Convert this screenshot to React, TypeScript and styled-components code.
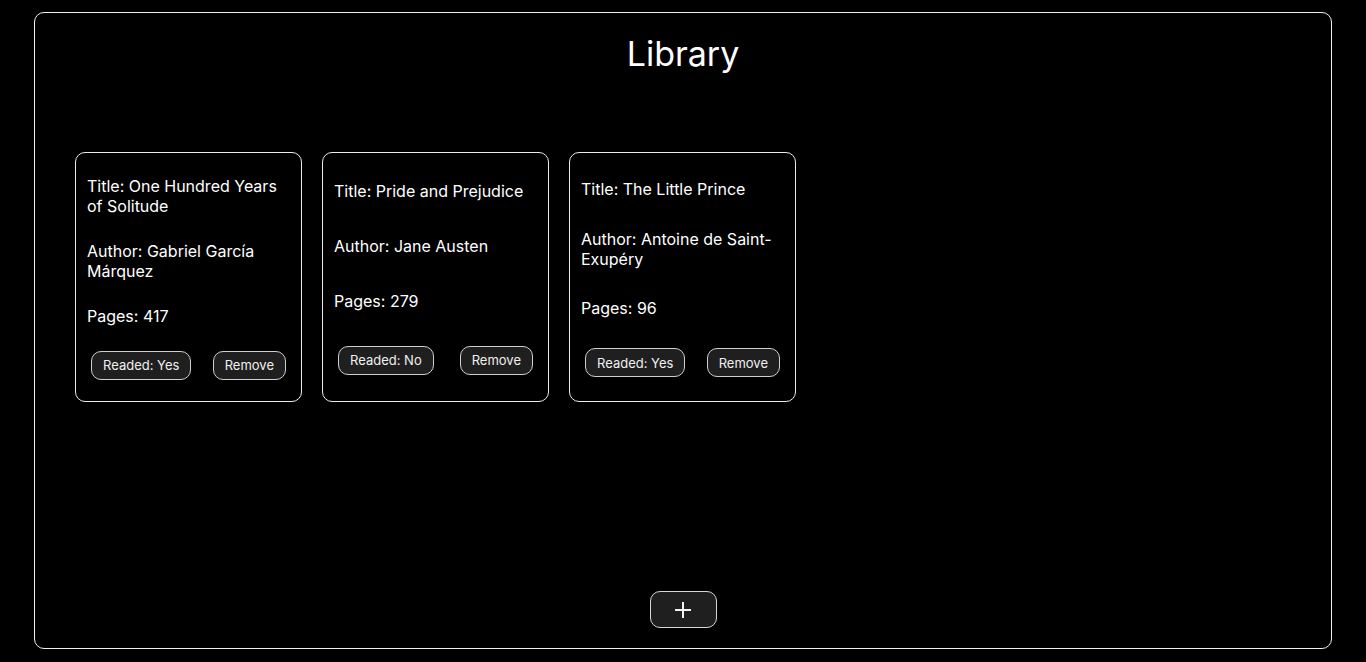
import React from "react"
import styled, { createGlobalStyle } from "styled-components"

type Book = { title: string; author: string; pages: number; read: boolean }

const books: Book[] = [
  { title: "One Hundred Years of Solitude", author: "Gabriel García Márquez", pages: 417, read: true },
  { title: "Pride and Prejudice", author: "Jane Austen", pages: 279, read: false },
  { title: "The Little Prince", author: "Antoine de Saint-Exupéry", pages: 96, read: true },
]

const GlobalStyle = createGlobalStyle`
  * {
    box-sizing: border-box;
  }
  body {
    margin: 0;
    background: #000;
    color: #fff;
    font-family: Inter, "Noto Sans", sans-serif;
  }
`

const PlusIcon = () => (
  <svg width="20" height="20" viewBox="0 0 20 20" fill="none">
    <path d="M10 2v16M2 10h16" stroke="#f2f2f2" strokeWidth="2" />
  </svg>
)

export default function App() {
  return (
    <>
      <GlobalStyle />
      <S.Page>
        <S.Frame>
          <S.Heading>Library</S.Heading>
          <S.Grid>
            {books.map((book) => (
              <S.Card key={book.title}>
                <S.Line>Title: {book.title}</S.Line>
                <S.Line>Author: {book.author}</S.Line>
                <S.Line>Pages: {book.pages}</S.Line>
                <S.Actions>
                  <S.SmallButton>Readed: {book.read ? "Yes" : "No"}</S.SmallButton>
                  <S.SmallButton>Remove</S.SmallButton>
                </S.Actions>
              </S.Card>
            ))}
          </S.Grid>
          <S.AddButton aria-label="Add book">
            <PlusIcon />
          </S.AddButton>
        </S.Frame>
      </S.Page>
    </>
  )
}

const S = {
  Page: styled.div`
    height: 100vh;
    padding: 12px 34px 13px;
  `,
  Frame: styled.main`
    height: 100%;
    display: flex;
    flex-direction: column;
    align-items: center;
    border: 1px solid #f2f2f2;
    border-radius: 10px;
    padding: 0 40px 20px;
  `,
  Heading: styled.h1`
    margin: 20px 0 0;
    font-size: 34px;
    font-weight: 400;
    line-height: 42px;
  `,
  Grid: styled.section`
    align-self: stretch;
    display: grid;
    grid-template-columns: repeat(auto-fill, 227px);
    gap: 20px;
    margin-top: 77px;
  `,
  Card: styled.article`
    height: 250px;
    display: flex;
    flex-direction: column;
    justify-content: space-around;
    padding: 11px 11px 9px;
    border: 1px solid #ececec;
    border-radius: 10px;
  `,
  Line: styled.p`
    margin: 0;
    font-size: 16px;
    line-height: 20px;
  `,
  Actions: styled.div`
    display: flex;
    justify-content: space-between;
    padding: 0 4px;
  `,
  SmallButton: styled.button`
    height: 29px;
    padding: 0 11px;
    border: 1px solid #cfcfcf;
    border-radius: 10px;
    background: #1f1f1f;
    color: #f0f0f0;
    font-family: inherit;
    font-size: 13px;
  `,
  AddButton: styled.button`
    margin-top: auto;
    width: 67px;
    height: 37px;
    display: flex;
    align-items: center;
    justify-content: center;
    border: 1px solid #d6d6d6;
    border-radius: 10px;
    background: #1f1f1f;
  `,
}
